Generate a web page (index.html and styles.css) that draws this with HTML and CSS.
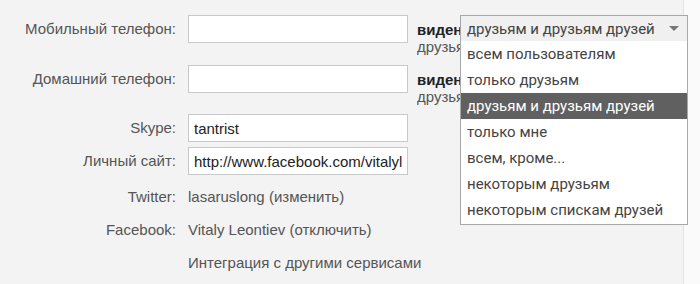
FILE: index.html
```html
<!DOCTYPE html>
<html lang="ru">
<head>
    <meta charset="UTF-8">
    <title>Контакты</title>
    <link rel="stylesheet" href="styles.css">
</head>
<body>
    <div class="panel">
        <div class="row row-tall">
            <label class="label">Мобильный телефон:</label>
            <input class="field" type="text" value="">
            <div class="privacy"><b>виден</b><br>друзьям и друзьям друзей</div>
        </div>
        <div class="row row-tall">
            <label class="label">Домашний телефон:</label>
            <input class="field" type="text" value="">
            <div class="privacy"><b>виден</b><br>друзьям и друзьям друзей</div>
        </div>
        <div class="row row-input">
            <label class="label">Skype:</label>
            <input class="field" type="text" value="tantrist">
        </div>
        <div class="row row-input">
            <label class="label">Личный сайт:</label>
            <input class="field" type="text" value="http://www.facebook.com/vitalyleontiev">
        </div>
        <div class="row row-text row-twitter">
            <span class="label">Twitter:</span>
            <span class="value">lasaruslong (изменить)</span>
        </div>
        <div class="row row-text row-facebook">
            <span class="label">Facebook:</span>
            <span class="value">Vitaly Leontiev (отключить)</span>
        </div>
        <div class="row row-text row-more">
            <span class="label"></span>
            <span class="value">Интеграция с другими сервисами</span>
        </div>

        <!-- выпадающий список видимости -->
        <div class="dropdown">
            <div class="dropdown-head">
                <span>друзьям и друзьям друзей</span>
                <span class="arrow"></span>
            </div>
            <ul class="dropdown-list">
                <li>всем пользователям</li>
                <li>только друзьям</li>
                <li class="selected">друзьям и друзьям друзей</li>
                <li>только мне</li>
                <li>всем, кроме...</li>
                <li>некоторым друзьям</li>
                <li>некоторым спискам друзей</li>
            </ul>
        </div>
    </div>
</body>
</html>
```

FILE: styles.css
```css
body {
    margin: 0;
    background-color: #fafafa;
    font-family: "Liberation Sans", Arial, sans-serif;
    font-size: 15px;
    color: #444;
}
.panel {
    position: relative;
    width: 684px;
    height: 284px;
    box-sizing: border-box;
    padding-top: 15px;
    background-color: #f3f3f3;
    border-right: 1px solid #e2e2e2;
}
.row {
    display: grid;
    grid-template-columns: 176px 220px auto;
    column-gap: 12px;
    align-items: start;
}
.label {
    text-align: right;
    color: #555;
    line-height: 28px;
}
.field {
    box-sizing: border-box;
    width: 220px;
    height: 28px;
    margin: 0;
    padding: 0 5px;
    border: 1px solid #c9c9c9;
    background: #fff;
    font-family: inherit;
    font-size: 15px;
    color: #222;
    outline: none;
}
/* видна только часть, остальное закрыто списком */
.privacy {
    width: 43px;
    margin-left: -3px;
    padding-top: 6px;
    overflow: hidden;
    white-space: nowrap;
    line-height: 17px;
    color: #555;
}
.privacy b {
    color: #222;
}
.row-tall {
    height: 28px;
    margin-bottom: 22px;
}
.row-tall + .row-tall {
    margin-bottom: 21px;
}
.row-input {
    margin-bottom: 5px;
}
.row-text .label,
.row-text .value {
    line-height: 20px;
}
.value {
    grid-column: 2 / 4;
    white-space: nowrap;
    color: #555;
}
.row-twitter {
    margin-top: 12px;
}
.row-facebook {
    margin-top: 13px;
}
.row-more {
    margin-top: 13px;
}
.dropdown {
    position: absolute;
    left: 460px;
    top: 15px;
    width: 228px;
    box-sizing: border-box;
    border: 1px solid #a8a8a8;
    background: #fff;
    font-family: Roboto, "Liberation Sans", sans-serif;
    font-size: 15px;
    color: #444;
}
.dropdown-head {
    display: flex;
    justify-content: space-between;
    align-items: center;
    height: 25px;
    padding: 0 6px;
    background: #f0f0f0;
}
.arrow {
    width: 0;
    height: 0;
    margin-right: 2px;
    border-left: 5px solid transparent;
    border-right: 5px solid transparent;
    border-top: 5px solid #777;
}
.dropdown-list {
    list-style: none;
    margin: 0;
    padding: 0 0 1px;
}
.dropdown-list li {
    height: 26px;
    line-height: 26px;
    padding: 0 6px;
}
.dropdown-list .selected {
    background: #606060;
    color: #fff;
}
```
